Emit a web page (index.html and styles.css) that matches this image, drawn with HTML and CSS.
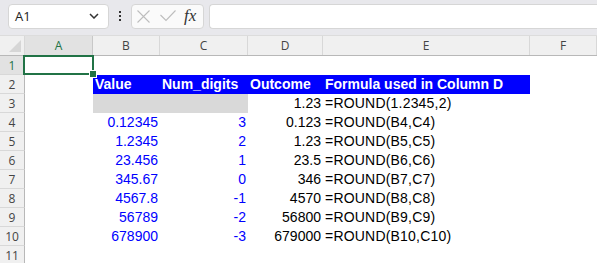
FILE: index.html
```html
<!DOCTYPE html>
<html lang="en">
<head>
  <meta charset="UTF-8">
  <title>ROUND</title>
  <link rel="stylesheet" href="styles.css">
</head>
<body>
  <div class="toolbar">
    <div class="namebox">
      <span>A1</span>
      <svg width="10" height="6" viewBox="0 0 10 6"><path d="M1 1 L5 5 L9 1" fill="none" stroke="#333" stroke-width="1.5"/></svg>
    </div>
    <div class="dots"><i></i><i></i><i></i></div>
    <div class="fxbox">
      <svg width="13" height="13" viewBox="0 0 13 13"><path d="M0.5 0.5 L12.5 12.5 M12.5 0.5 L0.5 12.5" stroke="#bdbdbd" stroke-width="1.1"/></svg>
      <svg width="16" height="12" viewBox="0 0 16 12"><path d="M0.5 5 L6 10.5 L15.5 0.5" fill="none" stroke="#bdbdbd" stroke-width="1.1"/></svg>
      <span class="fx">fx</span>
    </div>
    <div class="formula"></div>
  </div>

  <div class="sheet">
    <div class="corner"></div>
    <div class="colhead sel">A</div>
    <div class="colhead">B</div>
    <div class="colhead">C</div>
    <div class="colhead">D</div>
    <div class="colhead">E</div>
    <div class="colhead">F</div>
  </div>
  <div class="grid" id="grid"></div>

  <script>
    const rows = [
      ["", "", "", "", "", ""],
      ["", "Value", "Num_digits", "Outcome", "Formula used in Column D", ""],
      ["", "", "", "1.23", "=ROUND(1.2345,2)", ""],
      ["", "0.12345", "3", "0.123", "=ROUND(B4,C4)", ""],
      ["", "1.2345", "2", "1.23", "=ROUND(B5,C5)", ""],
      ["", "23.456", "1", "23.5", "=ROUND(B6,C6)", ""],
      ["", "345.67", "0", "346", "=ROUND(B7,C7)", ""],
      ["", "4567.8", "-1", "4570", "=ROUND(B8,C8)", ""],
      ["", "56789", "-2", "56800", "=ROUND(B9,C9)", ""],
      ["", "678900", "-3", "679000", "=ROUND(B10,C10)", ""],
      ["", "", "", "", "", ""]
    ];
    const cols = ["a", "b", "c", "d", "e", "f"];
    const grid = document.getElementById("grid");

    rows.forEach((row, i) => {
      const n = i + 1;
      const head = document.createElement("div");
      head.className = "rowhead" + (n === 1 ? " sel" : "");
      head.textContent = n;
      grid.appendChild(head);
      row.forEach((val, j) => {
        const cell = document.createElement("div");
        cell.className = "cell col-" + cols[j];
        if (n === 2 && j >= 1 && j <= 4) cell.classList.add("title");
        if (n === 3 && (j === 1 || j === 2)) cell.classList.add("shade");
        if (n === 1 && j === 0) cell.classList.add("active");
        cell.textContent = val;
        grid.appendChild(cell);
      });
    });
  </script>
</body>
</html>
```
FILE: styles.css
```css
body {
  margin: 0;
  padding: 0;
  width: 597px;
  height: 263px;
  overflow: hidden;
  background: #fff;
  font-family: "Liberation Sans", Arial, sans-serif;
}
.toolbar {
  display: flex;
  align-items: center;
  height: 36px;
  padding: 0 0 0 8px;
  box-sizing: border-box;
  background: #e8e8ec;
  border-bottom: 1px solid #dcdcdc;
  font-family: "Open Sans", "Noto Sans", sans-serif;
}
.namebox {
  width: 101px;
  height: 25px;
  box-sizing: border-box;
  background: #fff;
  border: 1px solid #d6d6d6;
  border-radius: 4px;
  display: flex;
  align-items: center;
  justify-content: space-between;
  padding: 0 9px 0 6px;
  font-size: 13px;
  color: #222;
  margin-top: -3px;
}
.dots {
  width: 22px;
  display: flex;
  flex-direction: column;
  align-items: center;
  gap: 2px;
  margin-top: -3px;
}
.dots i {
  width: 2px;
  height: 2px;
  background: #333;
}
.fxbox {
  width: 73px;
  height: 25px;
  box-sizing: border-box;
  background: #fafafa;
  border: 1px solid #d6d6d6;
  border-radius: 4px;
  display: flex;
  align-items: center;
  gap: 10px;
  padding: 0 3px 0 5px;
  margin-top: -3px;
}
.fx {
  font-family: "Liberation Serif", serif;
  font-style: italic;
  font-size: 17px;
  line-height: 1;
  color: #333;
  margin-left: -2px;
  margin-top: -2px;
}
.formula {
  flex: 1;
  height: 25px;
  box-sizing: border-box;
  margin-left: 5px;
  margin-top: -3px;
  background: #fff;
  border: 1px solid #d6d6d6;
  border-right: none;
  border-radius: 4px 0 0 4px;
}
.sheet, .grid {
  display: grid;
  grid-template-columns: 25px 68px 67px 88px 75px 207px 67px;
}
.sheet {
  height: 19px;
  background: #f0f0f0;
  border-bottom: 1px solid #b8b8b8;
}
.corner {
  position: relative;
  border-right: 1px solid #d8d8d8;
}
.corner::after {
  content: "";
  position: absolute;
  right: 3px;
  bottom: 3px;
  border-left: 12px solid transparent;
  border-bottom: 12px solid #d6d6d6;
}
.colhead {
  font-family: "Open Sans", "Noto Sans", sans-serif;
  font-size: 12px;
  color: #444;
  display: flex;
  align-items: center;
  justify-content: center;
  border-right: 1px solid #d8d8d8;
}
.colhead.sel {
  background: #e2e2e2;
  color: #217346;
  border-right-color: #c8c8c8;
}
.grid {
  grid-auto-rows: 19px;
}
.rowhead {
  font-family: "Open Sans", "Noto Sans", sans-serif;
  font-size: 12px;
  color: #444;
  background: #f0f0f0;
  border-bottom: 1px solid #d8d8d8;
  border-right: 1px solid #b8b8b8;
  box-sizing: border-box;
  display: flex;
  align-items: center;
  justify-content: center;
}
.rowhead.sel {
  color: #217346;
  background: #e2e2e2;
}
.cell {
  font-size: 14px;
  line-height: 19px;
  white-space: nowrap;
  padding: 0 2px;
  color: #000;
}
.col-b, .col-c {
  color: #0000ff;
  text-align: right;
}
.col-d {
  text-align: right;
}
.col-e {
  text-align: left;
  letter-spacing: 0.2px;
}
.cell.title {
  background: #0000ff;
  color: #fff;
  font-weight: bold;
  text-align: left;
  letter-spacing: 0;
}
.cell.shade {
  background: #d9d9d9;
}
.cell.active {
  position: relative;
  border: 2px solid #217346;
  margin: -1px -1px 0 -2px;
}
.cell.active::after {
  content: "";
  position: absolute;
  right: -5px;
  bottom: -5px;
  width: 6px;
  height: 6px;
  background: #217346;
  border: 1px solid #fff;
}
```
